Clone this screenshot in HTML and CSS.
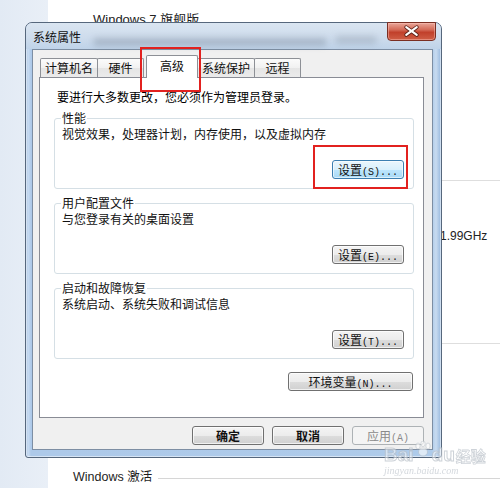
FILE: index.html
```html
<!DOCTYPE html>
<html lang="zh-CN">
<head>
<meta charset="utf-8">
<title>系统属性</title>
<link rel="stylesheet" href="styles.css">
</head>
<body>
<div class="desk">
  <div class="side"></div>
  <div class="page">
    <div class="edition">Windows 7 旗舰版</div>
    <div class="spec-row spec-cpu"><span class="cpu">1.99GHz</span></div>
    <div class="spec-row spec-rest"></div>
    <div class="activation"><span>Windows 激活</span><span class="rule"></span></div>
  </div>
</div>

<section class="dialog">
  <header class="titlebar">
    <span class="title">系统属性</span>
    <span class="blur blur1"></span>
    <span class="blur blur2"></span>
    <button class="close" aria-label="关闭">
      <svg width="49" height="19" viewBox="0 0 49 19">
        <path d="M19 5 L30 13 M30 5 L19 13" stroke="#5b2118" stroke-width="4" stroke-linecap="round" fill="none"/>
        <path d="M19 5 L30 13 M30 5 L19 13" stroke="#ffffff" stroke-width="2.2" stroke-linecap="round" fill="none"/>
      </svg>
    </button>
  </header>
  <div class="client">
    <nav class="tabs">
      <span class="tab">计算机名</span>
      <span class="tab">硬件</span>
      <span class="tab active">高级</span>
      <span class="tab">系统保护</span>
      <span class="tab">远程</span>
    </nav>
    <div class="panel">
      <p class="intro">要进行大多数更改，您必须作为管理员登录。</p>
      <fieldset class="group">
        <legend>性能</legend>
        <p class="desc">视觉效果，处理器计划，内存使用，以及虚拟内存</p>
        <button class="btn focus">设置<span class="key">(S)...</span></button>
      </fieldset>
      <fieldset class="group">
        <legend>用户配置文件</legend>
        <p class="desc">与您登录有关的桌面设置</p>
        <button class="btn">设置<span class="key">(E)...</span></button>
      </fieldset>
      <fieldset class="group">
        <legend>启动和故障恢复</legend>
        <p class="desc">系统启动、系统失败和调试信息</p>
        <button class="btn">设置<span class="key">(T)...</span></button>
      </fieldset>
      <div class="env-row">
        <button class="btn wide">环境变量<span class="key">(N)...</span></button>
      </div>
    </div>
    <div class="actions">
      <button class="btn act strong">确定</button>
      <button class="btn act strong">取消</button>
      <button class="btn act disabled">应用<span class="key">(A)</span></button>
    </div>
  </div>
</section>

<div class="mark mark-tab"></div>
<div class="mark mark-btn"></div>

<div class="watermark">
  <div class="wm-main"><span class="wm-baidu">Bai</span><svg class="paw" width="18" height="16" viewBox="0 0 18 16"><ellipse cx="4" cy="5" rx="2.2" ry="3" /><ellipse cx="9" cy="2.8" rx="2.2" ry="2.8"/><ellipse cx="14" cy="5" rx="2.2" ry="3"/><ellipse cx="9" cy="11" rx="4.5" ry="4"/></svg><span class="wm-baidu">du</span><span class="wm-jy">经验</span></div>
  <div class="wm-url">jingyan.baidu.com</div>
</div>
</body>
</html>
```

FILE: styles.css
```css
html, body {
  margin: 0;
  padding: 0;
}

body {
  position: relative;
  width: 500px;
  height: 488px;
  overflow: hidden;
  background: #ffffff;
  font-family: "Noto Sans CJK SC", sans-serif;
  font-size: 12px;
  color: #000;
}

/* background window */
.desk {
  display: grid;
  grid-template-columns: 48px 1fr;
  height: 488px;
}

.side {
  background: linear-gradient(to right, #e2eaf4, #e9eff7);
}

.page {
  display: flex;
  flex-direction: column;
  font-family: "Liberation Sans", "Noto Sans CJK SC", sans-serif;
  font-size: 12px;
  color: #222;
}

.edition {
  margin: 12px 0 0 45px;
  line-height: 16px;
  font-size: 13px;
}

.spec-row {
  box-sizing: border-box;
  border-top: 1px solid #dedede;
}

.spec-cpu {
  margin-top: 152px;
  height: 163px;
  padding: 48px 0 0 392px;
  line-height: 14px;
}

.spec-rest {
  height: 127px;
}

.activation {
  display: flex;
  align-items: center;
  margin-left: 25px;
  height: 14px;
  line-height: 14px;
  font-size: 12.5px;
  color: #1e1e1e;
}

.rule {
  flex: 1;
  margin-left: 6px;
  margin-top: 2px;
  border-top: 1px solid #d6d6d6;
}

/* dialog window */
.dialog {
  position: absolute;
  left: 25px;
  top: 22px;
  width: 417px;
  height: 436px;
  box-sizing: border-box;
  border: 1px solid #56677c;
  border-radius: 7px 7px 3px 3px;
  background:
    linear-gradient(to right,
      #9fbde0 0, #cadcf1 2px, #adc9e9 5px,
      #aecbea calc(100% - 9px), #c8dbf0 calc(100% - 5px), #97b8de 100%);
  box-shadow: inset 0 0 0 1px rgba(255, 255, 255, 0.5);
  display: flex;
  flex-direction: column;
}

.titlebar {
  position: relative;
  display: flex;
  align-items: flex-start;
  height: 26px;
  flex: none;
  border-radius: 6px 6px 0 0;
  background: linear-gradient(#dae5f1, #cedcec 55%, #bfd3e9);
}

.title {
  padding-left: 7px;
  line-height: 27px;
  font-size: 12px;
  color: #111;
}

.blur {
  position: absolute;
  height: 8px;
  background: rgba(85, 98, 115, 0.28);
  filter: blur(3px);
  border-radius: 4px;
}

.blur1 {
  left: 67px;
  top: 15px;
  width: 234px;
}

.blur2 {
  left: 309px;
  top: 13px;
  width: 42px;
  background: rgba(85, 98, 115, 0.22);
}

.close {
  margin: -1px 5px 0 auto;
  padding: 0;
  width: 49px;
  height: 19px;
  border: 1px solid #7a2e22;
  border-radius: 0 0 4px 4px;
  background: linear-gradient(#e9a699 0, #d46a57 40%, #c1402b 55%, #cf5e46 100%);
  box-shadow: inset 0 0 0 1px rgba(255, 200, 190, 0.45);
  display: flex;
  align-items: center;
  justify-content: center;
}

.close svg {
  display: block;
}

.client {
  box-sizing: border-box;
  flex: none;
  height: 401px;
  margin: 0 8px 0 6px;
  border: 1px solid #7d8ea3;
  background: #f0f0f0;
  padding: 5px 8px 0 6px;
}

/* tabs */
.tabs {
  display: flex;
  align-items: flex-end;
  height: 22px;
  padding-left: 1px;
}

.tab {
  box-sizing: border-box;
  height: 19px;
  min-width: 47px;
  padding: 0 4px;
  margin-left: -1px;
  border: 1px solid #8d9096;
  border-bottom: 0;
  border-radius: 2px 2px 0 0;
  background: linear-gradient(#fbfbfb, #f1f1f1 50%, #e5e5e5 51%, #ebebeb);
  line-height: 18px;
  text-align: center;
  color: #111;
}

.tab:first-child {
  margin-left: 0;
}

.tab.active {
  position: relative;
  z-index: 1;
  height: 23px;
  min-width: 52px;
  margin-left: 2px;
  margin-bottom: -1px;
  background: #ffffff;
  line-height: 20px;
}

/* panel */
.panel {
  box-sizing: border-box;
  height: 341px;
  border: 1px solid #898c95;
  background: #ffffff;
  padding: 11px 9px 0 14px;
}

.intro {
  margin: 0 0 0 3px;
  line-height: 16px;
}

.group {
  display: flex;
  flex-direction: column;
  min-width: 0;
  margin: 5px 0 0;
  padding: 0 9px 9px 7px;
  border: 1px solid #d5dfe5;
  border-radius: 3px;
}

.group + .group {
  margin-top: 6px;
}

.group legend {
  padding: 0 1px;
  margin-left: -1px;
  line-height: 16px;
  color: #111;
}

.desc {
  margin: 0;
  line-height: 16px;
  color: #111;
}

.btn {
  box-sizing: border-box;
  width: 72px;
  height: 19px;
  padding: 0;
  border: 1px solid #707070;
  border-radius: 3px;
  background: linear-gradient(#f4f4f4 0, #ececec 50%, #dddddd 51%, #d0d0d0 100%);
  box-shadow: inset 0 0 0 1px rgba(255, 255, 255, 0.7);
  font-family: "Noto Sans CJK SC", sans-serif;
  font-size: 12px;
  line-height: 17px;
  color: #111;
  text-align: center;
  white-space: nowrap;
}

.key {
  font-family: "Liberation Mono", monospace;
  font-size: 10px;
}

.group .btn {
  align-self: flex-end;
  margin-top: 18px;
}

.btn.focus {
  border-color: #3c7fb1;
  background: linear-gradient(#eaf6fd 0, #d9f0fc 50%, #bee6fd 51%, #a7d9f5 100%);
  box-shadow: inset 0 0 0 1px rgba(255, 255, 255, 0.6);
}

.env-row {
  display: flex;
  justify-content: flex-end;
  margin-top: 13px;
  padding-right: 1px;
}

.btn.wide {
  width: 125px;
}

.actions {
  display: flex;
  justify-content: flex-end;
  gap: 8px;
  margin-top: 8px;
  padding-right: 0;
}

.btn.strong {
  font-weight: 700;
}

.btn.disabled {
  border-color: #adb2b5;
  background: #f4f4f4;
  box-shadow: none;
  color: #8a8a8a;
}

/* annotations */
.mark {
  position: absolute;
  box-sizing: border-box;
  border: 2px solid #e2211f;
}

.mark-tab {
  left: 140px;
  top: 47px;
  width: 61px;
  height: 45px;
}

.mark-btn {
  left: 313px;
  top: 145px;
  width: 95px;
  height: 44px;
}

/* watermark */
.watermark {
  position: absolute;
  left: 384px;
  top: 441px;
  white-space: nowrap;
  opacity: 0.7;
}

.wm-main {
  display: flex;
  align-items: flex-end;
  height: 24px;
}

.wm-baidu {
  font-family: "Liberation Sans", sans-serif;
  font-weight: 700;
  font-size: 19px;
  line-height: 21px;
  color: rgba(255, 255, 255, 0.7);
  -webkit-text-stroke: 1px #b9c0c8;
}

.paw {
  align-self: flex-start;
  fill: rgba(255, 255, 255, 0.85);
  stroke: #b9c0c8;
  stroke-width: 0.8;
}

.wm-jy {
  margin-left: 1px;
  font-size: 15px;
  font-weight: 700;
  line-height: 19px;
  color: rgba(255, 255, 255, 0.7);
  -webkit-text-stroke: 0.8px #b9c0c8;
}

.wm-url {
  font-family: "Liberation Serif", serif;
  font-style: italic;
  font-size: 10px;
  line-height: 11px;
  color: #c2c8cf;
}
```
